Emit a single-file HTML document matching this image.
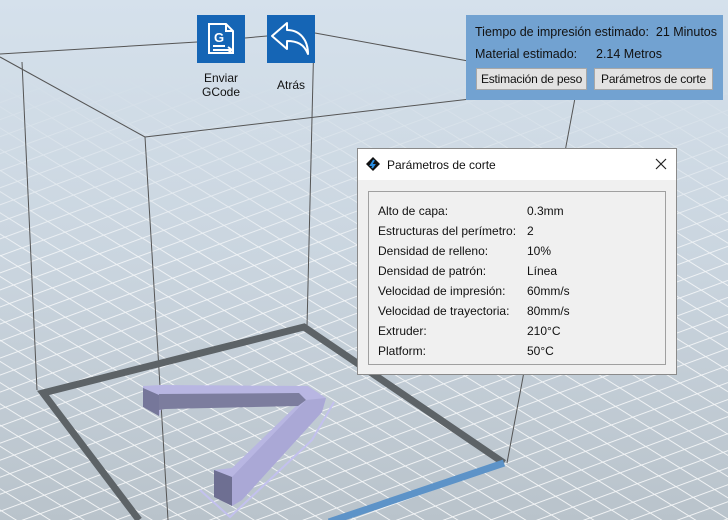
<!DOCTYPE html>
<html><head><meta charset="utf-8"><style>
body{margin:0;width:728px;height:520px;overflow:hidden;font-family:"Liberation Sans",sans-serif;font-size:12px;color:#111}
#bg{position:absolute;left:0;top:0}
.abs{position:absolute}
.ic{position:absolute;width:48px;height:48px;background:#1565b5}
.lbl{position:absolute;text-align:center;font-size:12px;line-height:14px;color:#111}
#panel{left:466px;top:15px;width:257px;height:85px;background:#72a2d1}
.btn{position:absolute;top:68px;height:20px;background:#e2e2e2;border:1px solid #a8a8a8;font-size:12px;line-height:20px;text-align:center;white-space:nowrap;letter-spacing:-0.2px}
#dlg{left:357px;top:148px;width:320px;height:227px;background:#f0f0f0;border:1px solid #8a8a8a;box-sizing:border-box}
#tb{position:absolute;left:0;top:0;width:318px;height:31px;background:#fff}
#grp{position:absolute;left:10px;top:42px;width:298px;height:174px;border:1px solid #a0a0a0;box-sizing:border-box}
.r{position:absolute;left:9px;font-size:12px}
.v{position:absolute;left:158px;font-size:12px}
</style></head><body>
<svg id="bg" width="728" height="520" viewBox="0 0 728 520">
<defs>
<linearGradient id="g" x1="0" y1="0" x2="0" y2="1">
<stop offset="0" stop-color="#d5e1ec"/><stop offset="0.5" stop-color="#cad5df"/><stop offset="1" stop-color="#b9c3cb"/></linearGradient>
<pattern id="p1" width="40" height="16" patternUnits="userSpaceOnUse" patternTransform="rotate(-20)">
<path d="M0 0H40" stroke="#fff" stroke-width="1.8"/></pattern>
<pattern id="p2" width="40" height="18" patternUnits="userSpaceOnUse" patternTransform="rotate(32)">
<path d="M0 0H40" stroke="#fff" stroke-width="1.8"/></pattern>
<linearGradient id="mg" x1="0" y1="0" x2="0" y2="1"><stop offset="0.15" stop-color="#000"/><stop offset="0.5" stop-color="#ddd"/><stop offset="1" stop-color="#fff"/></linearGradient>
<mask id="m"><rect width="728" height="520" fill="url(#mg)"/></mask>
</defs>
<rect width="728" height="520" fill="url(#g)"/>
<g mask="url(#m)" opacity="0.9">
<rect width="728" height="520" fill="url(#p1)"/>
<rect width="728" height="520" fill="url(#p2)"/>
</g>
<g stroke="#555" stroke-width="1" fill="none">
<line x1="0" y1="57" x2="145" y2="137"/>
<line x1="0" y1="54" x2="197" y2="42"/>
<line x1="245" y1="38" x2="267" y2="36"/>
<line x1="315" y1="33" x2="490" y2="65"/>
<line x1="145" y1="137" x2="530" y2="92"/>
<line x1="314" y1="35" x2="307" y2="327"/>
<line x1="22" y1="62" x2="37" y2="390"/>
<line x1="145" y1="137" x2="168" y2="520"/>
<line x1="575" y1="98" x2="507" y2="463"/>
</g>
<g stroke="#5d6367" stroke-width="7" fill="none" stroke-linejoin="miter">
<polyline points="139,520 43,393 304,327 504,463"/>
</g>
<line x1="504" y1="463" x2="329" y2="522" stroke="#5d93c8" stroke-width="7"/>
<g>
<polyline points="334,402 312,440 230,517 200,490" fill="none" stroke="#c3c1ee" stroke-width="2"/>
<polygon points="143,386 160,385 308,386 326,398 322,412 242,500 232,506 214,496 214,470 232,468 296,406 162,408 159,416 143,406" fill="#b8b6e2"/>
<polygon points="143,388 159,395 159,416 143,407" fill="#76779a"/>
<polygon points="159,394 299,393 306,400 298,406 165,409 159,410" fill="#7c7d9e"/>
<polygon points="214,470 232,477 232,506 214,497" fill="#6e6f92"/>
<polygon points="306,400 326,398 322,412 242,500 232,506 232,477" fill="#aaa8d6"/>
</g>
</svg>

<div class="ic" style="left:197px;top:15px">
<svg width="48" height="48" viewBox="0 0 48 48" fill="none" stroke="#fff" stroke-width="2">
<path d="M12 9H29L36 16V38H12Z"/><path d="M29 9V16H36"/>
<text x="17" y="27" font-family="Liberation Sans" font-weight="bold" font-size="13" fill="#fff" stroke="none">G</text>
<path d="M16 31H28M16 35H35M31 32L35 35L31 38"/>
</svg></div>
<div class="ic" style="left:267px;top:15px">
<svg width="48" height="48" viewBox="0 0 48 48" fill="none" stroke="#fff" stroke-width="2" stroke-linejoin="round">
<path d="M20 8L5 21L20 34V26C30 26 37 29 41 39C41 25 33 15 20 15Z"/>
</svg></div>
<div class="lbl" style="left:190px;top:71px;width:62px">Enviar<br>GCode</div>
<div class="lbl" style="left:261px;top:78px;width:60px">Atrás</div>

<div id="panel" class="abs">
<div class="abs" style="left:9px;top:10px;font-size:12.5px">Tiempo de impresión estimado:&nbsp; 21 Minutos</div>
<div class="abs" style="left:9px;top:32px;font-size:12.5px">Material estimado:</div>
<div class="abs" style="left:130px;top:32px;font-size:12.5px">2.14 Metros</div>
</div>
<div class="btn" style="left:476px;width:109px">Estimación de peso</div>
<div class="btn" style="left:594px;width:117px">Parámetros de corte</div>

<div id="dlg" class="abs">
<div id="tb">
<svg class="abs" style="left:8px;top:8px" width="14" height="14" viewBox="0 0 14 14"><polygon points="7,0 14,7 7,14 0,7" fill="#111"/><path d="M8 3L5 8H8L6 11" stroke="#2a8de0" stroke-width="2" fill="none"/></svg>
<div class="abs" style="left:29px;top:9px;font-size:12px">Parámetros de corte</div>
<svg class="abs" style="left:297px;top:9px" width="12" height="12"><path d="M1 1L11 11M11 1L1 11" stroke="#222" stroke-width="1.2"/></svg>
</div>
<div id="grp">
<div class="r" style="top:12px">Alto de capa:</div><div class="v" style="top:12px">0.3mm</div>
<div class="r" style="top:32px">Estructuras del perímetro:</div><div class="v" style="top:32px">2</div>
<div class="r" style="top:52px">Densidad de relleno:</div><div class="v" style="top:52px">10%</div>
<div class="r" style="top:72px">Densidad de patrón:</div><div class="v" style="top:72px">Línea</div>
<div class="r" style="top:92px">Velocidad de impresión:</div><div class="v" style="top:92px">60mm/s</div>
<div class="r" style="top:112px">Velocidad de trayectoria:</div><div class="v" style="top:112px">80mm/s</div>
<div class="r" style="top:132px">Extruder:</div><div class="v" style="top:132px">210°C</div>
<div class="r" style="top:152px">Platform:</div><div class="v" style="top:152px">50°C</div>
</div>
</div>
</body></html>
